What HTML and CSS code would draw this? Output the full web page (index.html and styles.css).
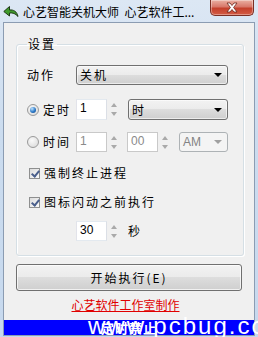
FILE: index.html
```html
<!DOCTYPE html>
<html lang="zh-CN">
<head>
    <meta charset="UTF-8">
    <title>心艺智能关机大师</title>
    <link rel="stylesheet" href="styles.css">
</head>
<body>
    <div class="window">
        <div class="titlebar">
            <svg class="app-icon" width="16" height="12" viewBox="0 0 16 12">
                <path d="M15 11.5 C14 6.5 10.5 4.5 6.5 5 L6.5 1.5 L0.8 6.5 L6.5 11 L6.5 8 C9.5 7.5 12.5 8.5 15 11.5 Z" fill="#3f9b2c" stroke="#1f3a17" stroke-width="1" stroke-linejoin="round"/>
            </svg>
            <span class="title">心艺智能关机大师&nbsp; 心艺软件工...</span>
            <div class="close-btn">
                <svg width="14" height="11" viewBox="0 0 14 11">
                    <path d="M2 1 L5 1 L7 3.5 L9 1 L12 1 L8.6 5.5 L12 10 L9 10 L7 7.5 L5 10 L2 10 L5.4 5.5 Z" fill="#fff" stroke="#6a2419" stroke-width="0.8" stroke-linejoin="round"/>
                </svg>
            </div>
        </div>

        <div class="client">
            <fieldset class="group">
                <legend>设置</legend>

                <div class="row row-action">
                    <span class="label">动作</span>
                    <div class="combo combo-wide">
                        <span>关机</span>
                        <i class="arrow"></i>
                    </div>
                </div>

                <div class="row row-timer">
                    <label class="label radio checked"><span class="radio-dot"></span>定时</label>
                    <div class="spin">
                        <div class="spin-box">1</div>
                        <div class="spin-arrows"><i class="up"></i><i class="down"></i></div>
                    </div>
                    <div class="combo combo-unit">
                        <span>时</span>
                        <i class="arrow"></i>
                    </div>
                </div>

                <div class="row row-clock">
                    <label class="label radio"><span class="radio-dot"></span>时间</label>
                    <div class="spin disabled">
                        <div class="spin-box">1</div>
                        <div class="spin-arrows"><i class="up"></i><i class="down"></i></div>
                    </div>
                    <div class="spin disabled spin-min">
                        <div class="spin-box">00</div>
                        <div class="spin-arrows"><i class="up"></i><i class="down"></i></div>
                    </div>
                    <div class="combo combo-ampm disabled">
                        <span>AM</span>
                        <i class="arrow"></i>
                    </div>
                </div>

                <div class="row row-check first">
                    <label class="check"><span class="check-box"></span>强制终止进程</label>
                </div>

                <div class="row row-check">
                    <label class="check"><span class="check-box"></span>图标闪动之前执行</label>
                </div>

                <div class="row row-delay">
                    <div class="spin">
                        <div class="spin-box">30</div>
                        <div class="spin-arrows"><i class="up"></i><i class="down"></i></div>
                    </div>
                    <span class="unit">秒</span>
                </div>
            </fieldset>

            <button class="start-btn">开始执行(E)</button>
            <a class="credit" href="#">心艺软件工作室制作</a>
            <div class="statusbar">定时禁止</div>
        </div>

        <span class="watermark">www.pcbug.cc</span>
    </div>
</body>
</html>
```

FILE: styles.css
```css
* {
    margin: 0;
    padding: 0;
    box-sizing: border-box;
}

body {
    font-family: "Noto Sans CJK SC", sans-serif;
    font-size: 12px;
    color: #000;
    background: #fff;
}

.window {
    position: relative;
    width: 258px;
    height: 337px;
    display: flex;
    flex-direction: column;
    overflow: hidden;
    background: linear-gradient(#dce7f4, #cbdcef 40%, #c7d9ee);
}

/* title bar */
.titlebar {
    height: 22px;
    display: flex;
    align-items: flex-start;
}

.app-icon {
    margin: 5px 4px 0 3px;
    flex: none;
}

.title {
    margin-top: 4px;
    line-height: 16px;
    white-space: nowrap;
}

.close-btn {
    margin-left: auto;
    margin-right: 4px;
    width: 44px;
    height: 16px;
    border: 1px solid #7b2f24;
    border-top: none;
    border-radius: 0 0 5px 5px;
    background: linear-gradient(#eab0a3, #d8786a 45%, #c4402c 55%, #d35c45);
    box-shadow: inset 0 0 0 1px rgba(255, 255, 255, 0.35);
    display: flex;
    align-items: center;
    justify-content: center;
}

/* client area */
.client {
    flex: 1;
    margin: 0 3px 1px;
    border: 1px solid #8b9cb2;
    background: #f0f0f0;
    display: flex;
    flex-direction: column;
}

.group {
    margin: 14px 0 0 12px;
    width: 228px;
    height: 219px;
    border: 1px solid #d5dfe5;
    border-radius: 3px;
    box-shadow: inset 1px 1px 0 #fff, 1px 1px 0 #fff;
    padding: 0 0 0 10px;
    min-width: 0;
}

.group legend {
    padding: 0 1px;
    line-height: 14px;
    letter-spacing: 2px;
}

.row {
    display: flex;
    align-items: center;
}

.row-action { margin-top: 14px; height: 20px; }
.row-timer { margin-top: 14px; height: 21px; }
.row-clock { margin-top: 12px; height: 20px; }
.row-check { margin-top: 9px; height: 20px; }
.row-check.first { margin-top: 11px; }
.row-delay { margin-top: 9px; height: 20px; padding-left: 49px; }

.label {
    width: 49px;
    flex: none;
    letter-spacing: 2px;
    line-height: 16px;
}

/* combo boxes */
.combo {
    position: relative;
    height: 100%;
    border: 1px solid #707070;
    border-radius: 3px;
    background: linear-gradient(#f2f2f2, #ebebeb 50%, #dddddd 50%, #cfcfcf);
    box-shadow: inset 0 0 0 1px rgba(255, 255, 255, 0.6);
    display: flex;
    align-items: center;
    padding-left: 3px;
    letter-spacing: 2px;
    line-height: 16px;
}

.combo .arrow {
    position: absolute;
    right: 5px;
    top: 50%;
    margin-top: -2px;
    border-left: 4px solid transparent;
    border-right: 4px solid transparent;
    border-top: 4px solid #000;
}

.combo-wide { width: 152px; }
.combo-unit { width: 100px; }
.combo-ampm { width: 49px; margin-left: 8px; }

.combo.disabled {
    border-color: #adb2b5;
    background: #f4f4f4;
    box-shadow: none;
    color: #838383;
    font-family: "Liberation Sans", sans-serif;
    letter-spacing: 0;
}

.combo.disabled .arrow {
    border-top-color: #a0a0a0;
}

/* spin edits */
.spin {
    display: flex;
    align-items: stretch;
    height: 100%;
    width: 44px;
    flex: none;
    margin-right: 8px;
}

.spin-min { margin-right: 0; margin-left: -1px; }

.spin-box {
    width: 31px;
    border: 1px solid #abadb3;
    border-top-color: #e3e9ef;
    border-left-color: #e2e3ea;
    border-right-color: #dbdfe6;
    border-bottom-color: #e3e9ef;
    background: #fff;
    font-family: "Liberation Sans", sans-serif;
    font-size: 12px;
    line-height: 17px;
    padding-left: 3px;
}

.spin.disabled .spin-box {
    border-color: #c9c9c9;
    color: #8a8a8a;
}

.spin-arrows {
    flex: 1;
    display: flex;
    flex-direction: column;
    align-items: center;
    justify-content: center;
    gap: 5px;
}

.spin-arrows i {
    width: 0;
    height: 0;
    border-left: 3.5px solid transparent;
    border-right: 3.5px solid transparent;
}

.spin-arrows .up { border-bottom: 4px solid #a9a9a9; }
.spin-arrows .down { border-top: 4px solid #a9a9a9; }

/* radio buttons */
.radio {
    display: flex;
    align-items: center;
}

.radio-dot {
    width: 12px;
    height: 12px;
    border-radius: 50%;
    border: 1px solid #9a9a9a;
    background: radial-gradient(circle at 40% 35%, #fafafa, #d6d6d6);
    margin-right: 4px;
    flex: none;
    position: relative;
}

.radio.checked .radio-dot::after {
    content: "";
    position: absolute;
    left: 2px;
    top: 2px;
    width: 6px;
    height: 6px;
    border-radius: 50%;
    background: radial-gradient(circle at 35% 30%, #bfe3ff, #2b79c7 55%, #0c3f82);
}

/* check boxes */
.check {
    display: flex;
    align-items: center;
    padding-left: 2px;
    letter-spacing: 2px;
    line-height: 16px;
}

.check-box {
    width: 11px;
    height: 11px;
    border: 1px solid #8e8f8f;
    background: linear-gradient(135deg, #dcdcdc, #fbfbfb);
    margin-right: 4px;
    position: relative;
    flex: none;
}

.check-box::after {
    content: "";
    position: absolute;
    left: 3px;
    top: 0;
    width: 3px;
    height: 6px;
    border-right: 2px solid #4a5f8c;
    border-bottom: 2px solid #4a5f8c;
    transform: rotate(40deg);
}

.unit {
    margin-left: 0;
    line-height: 16px;
}

/* bottom area */
.start-btn {
    margin: 8px 0 0 12px;
    width: 226px;
    height: 27px;
    border: 1px solid #707070;
    border-radius: 3px;
    background: linear-gradient(#f2f2f2, #ebebeb 50%, #dddddd 50%, #cfcfcf);
    box-shadow: inset 0 0 0 1px rgba(255, 255, 255, 0.7);
    font-family: "Noto Sans CJK SC", sans-serif;
    font-size: 12px;
    letter-spacing: 2px;
    color: #000;
}

.credit {
    margin-top: 6px;
    align-self: center;
    line-height: 16px;
    color: #e00000;
    text-decoration: underline;
    margin-left: -7px;
}

.statusbar {
    margin-top: 7px;
    height: 15px;
    background: #0000ff;
    color: #fff;
    font-size: 13px;
    font-weight: bold;
    line-height: 15px;
    text-align: center;
    letter-spacing: 1px;
}

.watermark {
    position: absolute;
    left: 88px;
    bottom: -3px;
    font-family: "Liberation Sans", sans-serif;
    font-size: 24px;
    letter-spacing: 2px;
    color: #fff;
    white-space: nowrap;
    pointer-events: none;
}
```
